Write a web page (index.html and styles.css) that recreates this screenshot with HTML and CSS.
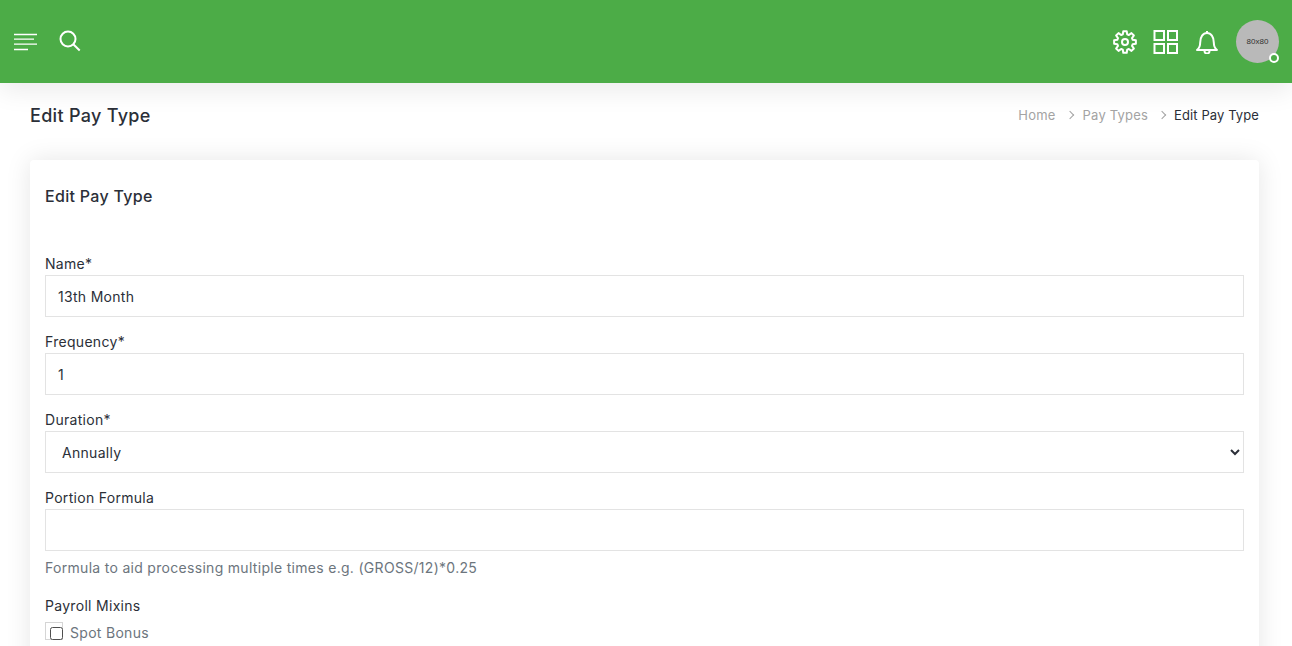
FILE: index.html
```html
<!DOCTYPE html>
<html lang="en">
<head>
    <meta charset="UTF-8">
    <meta name="viewport" content="width=device-width, initial-scale=1.0">
    <title>Edit Pay Type</title>
    <link rel="stylesheet" href="styles.css">
</head>
<body>
    <header class="topbar">
        <div class="topbar-left">
            <svg class="icon-menu" width="24" height="18" viewBox="0 0 24 18" fill="none" stroke="#fff" stroke-width="1.3">
                <path d="M0 1.500h23M0 6.200h20M0 11.200h23M0 16.500h14"/>
            </svg>
            <svg class="icon-search" width="22" height="22" viewBox="0 0 22 22" fill="none" stroke="#fff" stroke-width="2">
                <circle cx="9" cy="9" r="7.500"/>
                <path d="M14.300 14.300l6.400 6.200"/>
            </svg>
        </div>
        <div class="topbar-right">
            <svg width="24" height="24" viewBox="0 0 24 24" fill="none" stroke="#fff" stroke-width="2" stroke-linejoin="round">
                <path d="M9.800 4.310L10.280 1.140H13.720L14.200 4.310L15.880 5L18.470 3.100L20.900 5.530L19 8.120L19.690 9.800L22.860 10.280V13.720L19.690 14.200L19 15.880L20.900 18.470L18.470 20.900L15.880 19L14.200 19.690L13.720 22.860H10.280L9.800 19.690L8.120 19L5.530 20.900L3.100 18.470L5 15.880L4.310 14.200L1.140 13.720V10.280L4.310 9.800L5 8.120L3.100 5.530L5.530 3.100L8.120 5z"/>
                <circle cx="12" cy="12" r="3"/>
            </svg>
            <svg width="26" height="24" viewBox="0 0 26 24" fill="none" stroke="#fff" stroke-width="2">
                <rect x="1.500" y="1" width="9.500" height="9"/>
                <rect x="15" y="1" width="9" height="9"/>
                <rect x="1.500" y="14" width="9.500" height="9"/>
                <rect x="15" y="14" width="9" height="9"/>
            </svg>
            <svg width="24" height="24" viewBox="0 0 24 24" fill="none" stroke="#fff" stroke-width="2" stroke-linejoin="round">
                <path d="M2 20c2.500-2 3.200-4 3.200-7.500C5.200 7 8 3 12 3s6.800 4 6.800 9.500c0 3.500.7 5.500 3.200 7.500z"/>
                <path d="M12 1v2M9.500 21a2.500 2.500 0 0 0 5 0"/>
            </svg>
            <div class="avatar">
                <span>80x80</span>
                <i class="status-dot"></i>
            </div>
        </div>
    </header>

    <main class="page">
        <div class="page-head">
            <h1>Edit Pay Type</h1>
            <ol class="crumbs">
                <li>Home</li>
                <li class="sep"></li>
                <li>Pay Types</li>
                <li class="sep"></li>
                <li class="current">Edit Pay Type</li>
            </ol>
        </div>

        <section class="card">
            <h2>Edit Pay Type</h2>
            <form>
                <div class="field">
                    <label for="name">Name*</label>
                    <input type="text" id="name" value="13th Month">
                </div>
                <div class="field">
                    <label for="frequency">Frequency*</label>
                    <input type="text" id="frequency" value="1">
                </div>
                <div class="field">
                    <label for="duration">Duration*</label>
                    <select id="duration">
                        <option>Annually</option>
                        <option>Monthly</option>
                    </select>
                </div>
                <div class="field">
                    <label for="formula">Portion Formula</label>
                    <input type="text" id="formula">
                    <p class="help">Formula to aid processing multiple times e.g. (GROSS/12)*0.25</p>
                </div>
                <div class="field mixins">
                    <label>Payroll Mixins</label>
                    <label class="check">
                        <input type="checkbox">
                        <span>Spot Bonus</span>
                    </label>
                </div>
            </form>
        </section>
    </main>
</body>
</html>
```

FILE: styles.css
```css
html, body {
    height: 100%;
    overflow: hidden;
}
body {
    margin: 0;
    background: #fff;
    color: #2b2f38;
    font-family: Inter, "Noto Sans", sans-serif;
    font-size: 14px;
    letter-spacing: 0.3px;
}
.topbar {
    display: flex;
    justify-content: space-between;
    align-items: center;
    height: 83px;
    padding: 0 13px 0 14px;
    background: #4cac47;
    box-shadow: 0 8px 24px rgba(0, 0, 0, 0.08);
}
.topbar-left {
    display: flex;
    align-items: center;
    gap: 21px;
}
.icon-search {
    margin-top: -2px;
}
.topbar-right {
    display: flex;
    align-items: center;
    gap: 16px;
}
.avatar {
    position: relative;
    display: flex;
    align-items: center;
    justify-content: center;
    width: 43px;
    height: 43px;
    margin-left: 1px;
    border-radius: 50%;
    background: #b9b9b9;
    color: #333;
    font-family: "Liberation Sans", sans-serif;
    font-size: 8px;
    letter-spacing: 0;
}
.status-dot {
    position: absolute;
    right: 0;
    bottom: 0;
    width: 6px;
    height: 6px;
    border: 2px solid #fff;
    border-radius: 50%;
    background: #4cac47;
}
.page {
    padding: 0 33px 0 30px;
}
.page-head {
    display: flex;
    justify-content: space-between;
    align-items: center;
    height: 64px;
    margin-bottom: 13px;
}
h1 {
    margin: 0;
    font-size: 18px;
    font-weight: 500;
}
.crumbs {
    display: flex;
    align-items: center;
    gap: 10px;
    margin: 0;
    padding: 0;
    list-style: none;
    color: #a3a3a3;
    font-size: 13px;
    letter-spacing: 0.2px;
}
.crumbs .sep {
    width: 5px;
    height: 5px;
    margin-left: 1px;
    border-top: 1px solid #a3a3a3;
    border-right: 1px solid #a3a3a3;
    transform: rotate(45deg);
}
.crumbs .current {
    margin-left: -1px;
    color: #2b2f38;
    letter-spacing: 0.1px;
}
.card {
    padding: 26px 15px 40px;
    border-radius: 4px;
    background: #fff;
    box-shadow: 0 0 26px rgba(0, 0, 0, 0.1);
}
h2 {
    margin: 0 0 47px;
    font-size: 16px;
    font-weight: 500;
    line-height: 20px;
}
.field {
    margin-bottom: 14px;
}
.field > label {
    display: block;
    height: 22px;
    line-height: 22px;
}
.field input[type="text"],
.field select {
    display: block;
    box-sizing: border-box;
    width: 100%;
    height: 42px;
    padding: 0 12px;
    border: 1px solid #e3e3e3;
    border-radius: 0;
    background: #fff;
    color: #2b2f38;
    font: inherit;
    letter-spacing: inherit;
}
.help {
    margin: 6px 0 0;
    color: #6c757d;
    line-height: 22px;
}
.mixins {
    margin-top: 16px;
}
.field .check {
    position: relative;
    display: flex;
    align-items: center;
    gap: 7px;
    margin-top: 5px;
    color: #6c757d;
}
.check::before {
    content: "";
    position: absolute;
    left: 0;
    top: 0;
    width: 16px;
    height: 16px;
    border: 1px solid #d5d5d5;
}
.check input {
    appearance: none;
    position: relative;
    box-sizing: border-box;
    width: 13px;
    height: 13px;
    margin: 1px 0 0 5px;
    border: 1px solid #4f4f4f;
    border-radius: 2.5px;
    background: #fff;
}
```
